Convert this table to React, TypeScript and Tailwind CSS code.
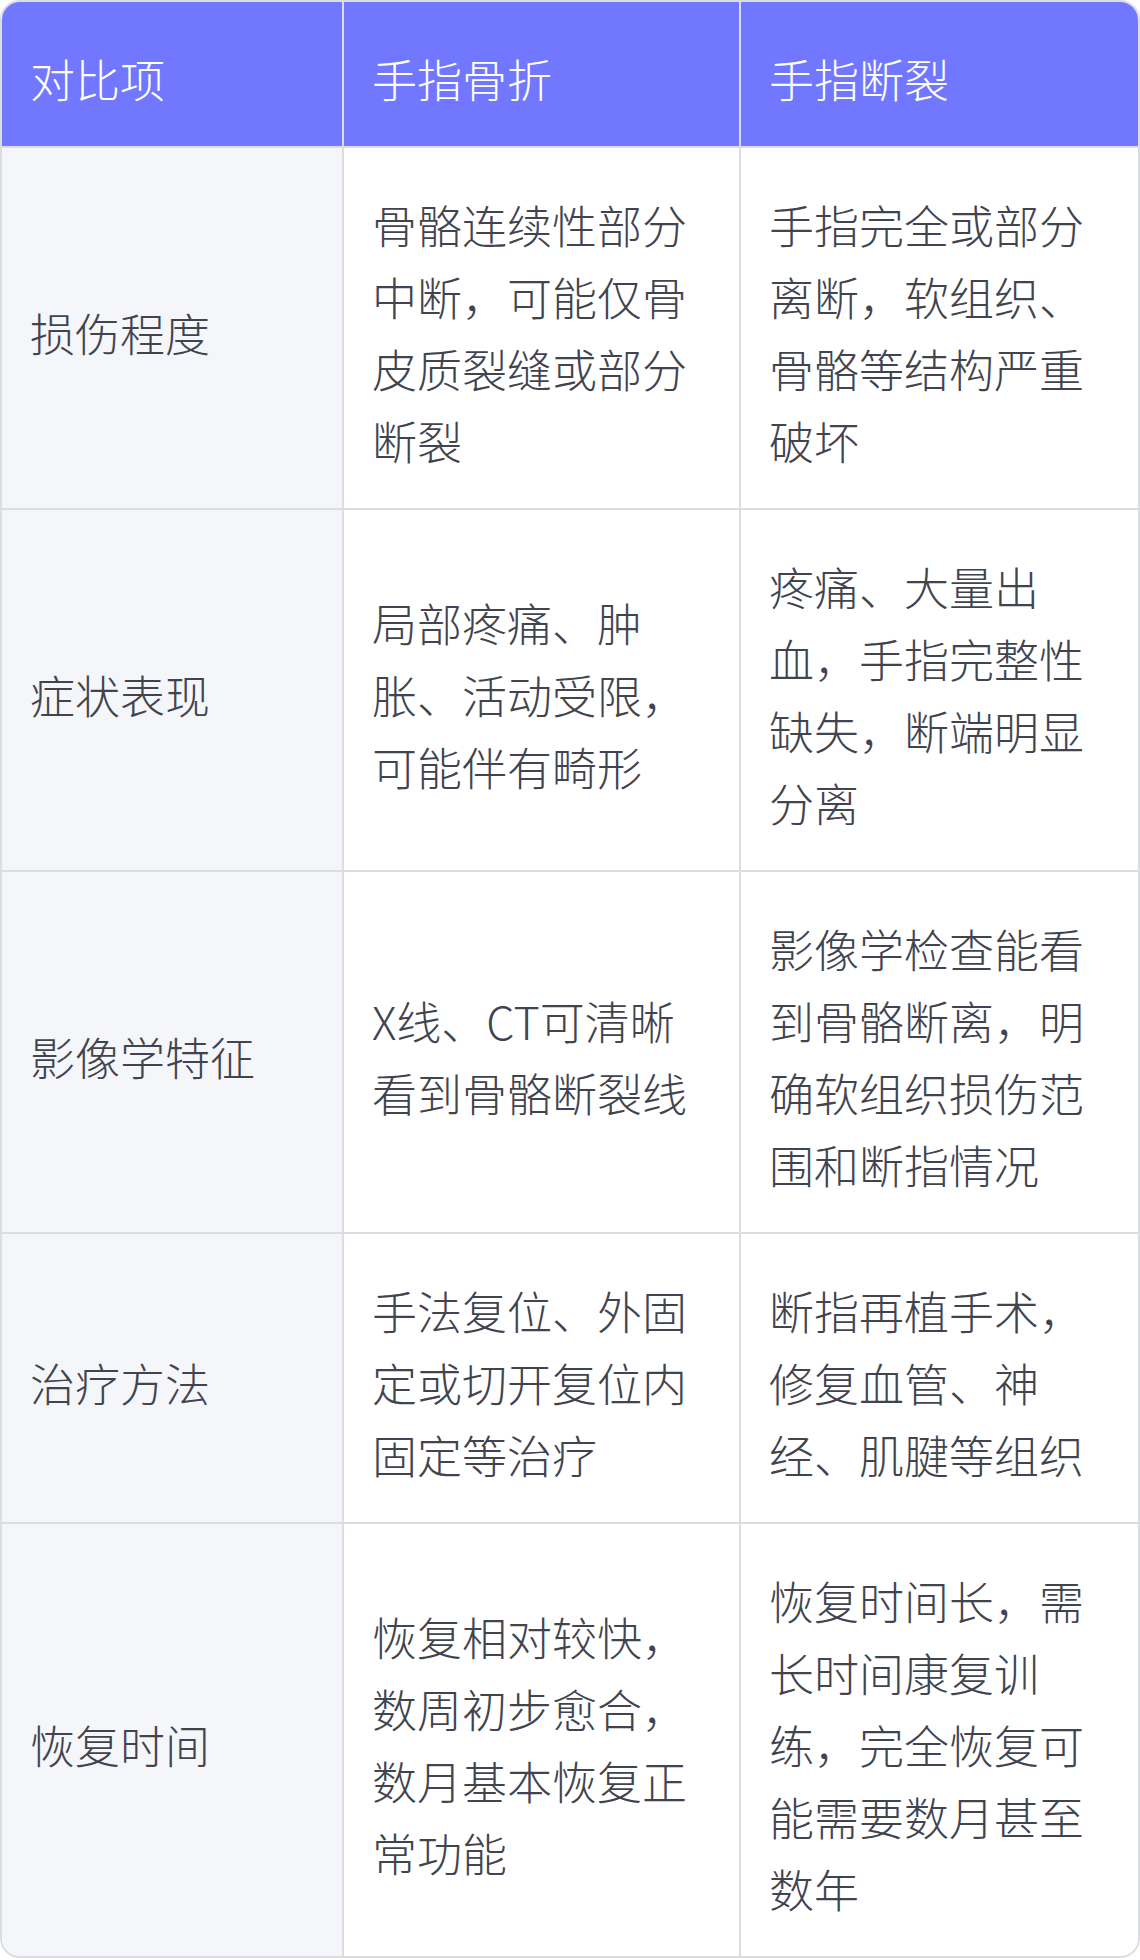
import React from "react";

const rows: [string, string, string][] = [
  ["损伤程度", "骨骼连续性部分中断，可能仅骨皮质裂缝或部分断裂", "手指完全或部分离断，软组织、骨骼等结构严重破坏"],
  ["症状表现", "局部疼痛、肿胀、活动受限，可能伴有畸形", "疼痛、大量出血，手指完整性缺失，断端明显分离"],
  ["影像学特征", "X线、CT可清晰看到骨骼断裂线", "影像学检查能看到骨骼断离，明确软组织损伤范围和断指情况"],
  ["治疗方法", "手法复位、外固定或切开复位内固定等治疗", "断指再植手术，修复血管、神经、肌腱等组织"],
  ["恢复时间", "恢复相对较快，数周初步愈合，数月基本恢复正常功能", "恢复时间长，需长时间康复训练，完全恢复可能需要数月甚至数年"],
];

export default function App() {
  return (
    <div className="w-[1140px] bg-white font-['Noto_Sans_CJK_SC',sans-serif] font-light text-[45px] leading-[72px]">
      <div className="overflow-hidden rounded-[20px] border-2 border-[#dcdde2]">
        <div className="grid grid-cols-[342px_397px_1fr]">
          {["对比项", "手指骨折", "手指断裂"].map((h, i) => (
            <div
              key={h}
              className={
                i < 2
                  ? "flex items-center border-b-2 border-r-2 border-[#dcdde2] bg-[#7277ff] px-[28px] pt-[41px] pb-[31px] text-white"
                  : "flex items-center border-b-2 border-[#dcdde2] bg-[#7277ff] px-[28px] pt-[41px] pb-[31px] text-white"
              }
            >
              {h}
            </div>
          ))}
          {rows.map((r, ri) => {
            const last = ri === rows.length - 1;
            return (
              <React.Fragment key={r[0]}>
                <div
                  className={
                    last
                      ? "flex items-center border-r-2 border-[#dcdde2] bg-[#f5f6fa] px-[28px] pt-[41px] pb-[31px] text-[#41444f]"
                      : "flex items-center border-b-2 border-r-2 border-[#dcdde2] bg-[#f5f6fa] px-[28px] pt-[41px] pb-[31px] text-[#41444f]"
                  }
                >
                  {r[0]}
                </div>
                <div
                  className={
                    last
                      ? "flex items-center border-r-2 border-[#dcdde2] bg-white px-[28px] pt-[41px] pb-[31px] text-[#41444f]"
                      : "flex items-center border-b-2 border-r-2 border-[#dcdde2] bg-white px-[28px] pt-[41px] pb-[31px] text-[#41444f]"
                  }
                >
                  {r[1]}
                </div>
                <div
                  className={
                    last
                      ? "flex items-center bg-white px-[28px] pt-[41px] pb-[31px] text-[#41444f]"
                      : "flex items-center border-b-2 border-[#dcdde2] bg-white px-[28px] pt-[41px] pb-[31px] text-[#41444f]"
                  }
                >
                  {r[2]}
                </div>
              </React.Fragment>
            );
          })}
        </div>
      </div>
    </div>
  );
}
